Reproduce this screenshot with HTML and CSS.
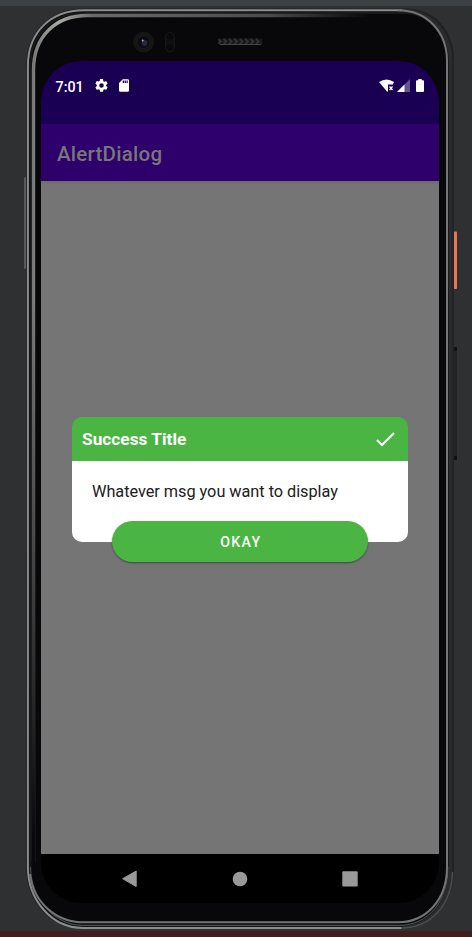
FILE: index.html
```
<!DOCTYPE html>
<html lang="en">
<head>
<meta charset="utf-8">
<title>AlertDialog</title>
<link rel="stylesheet" href="styles.css">
</head>
<body>
<div class="stage">
  <svg class="device" viewBox="0 0 472 937" aria-hidden="true">
    <defs>
      <linearGradient id="innerEdge" gradientUnits="userSpaceOnUse" x1="32" y1="0" x2="370" y2="0">
        <stop offset="0" stop-color="#777875"/>
        <stop offset=".08" stop-color="#a8a8a5"/>
        <stop offset=".18" stop-color="#6b6b69"/>
        <stop offset=".7" stop-color="#4b4b4b"/>
        <stop offset="1" stop-color="#08080a"/>
      </linearGradient>
      <linearGradient id="leftFade" gradientUnits="userSpaceOnUse" x1="0" y1="300" x2="0" y2="850">
        <stop offset="0" stop-color="#08080a" stop-opacity="0"/>
        <stop offset="1" stop-color="#08080a"/>
      </linearGradient>
      <pattern id="mesh" width="5.4" height="5" patternUnits="userSpaceOnUse" x="218" y="39">
        <path d="M0 0l3 2.5L0 5" fill="none" stroke="#383838" stroke-width="1.4"/>
      </pattern>
    </defs>
    <!-- side buttons -->
    <rect x="24" y="177" width="2" height="92" rx="1" fill="#58595a"/>
    <rect x="453.500" y="231.500" width="3.500" height="57.500" rx="1" fill="#ee7358"/>
    <rect x="454" y="347" width="3" height="113" rx="1" fill="#222425"/>
    <path d="M454 347h3v4h-3zM454 456h3v4h-3z" fill="#111"/>
    <!-- metal body -->
    <path d="M84 8.500H405C435 8.500 454 30 454 61V867C454 903 432 929 402 929H83C49 929 26 901 26 867V66C26 31 50 8.500 84 8.500Z" fill="#202122"/>
    <path d="M84 10.300H402C430 10.300 449 31 449 61V867C449 902 430 928 402 928H83C51 928 27.900 899 27.900 867V66C27.900 32 51 10.300 84 10.300Z" fill="#101112"/>
    <path d="M402 11C431 11 450.500 33 450.500 61V867C450.500 902 430 926.500 402 926.500" fill="none" stroke="#292b2c" stroke-width="4"/>
    <path d="M402 928H83C51 928 27.900 899 27.900 867V66C27.900 32 51 10.300 84 10.300H402" fill="none" stroke="#8a8c90" stroke-width="2"/>
    <path d="M401 928C432 928 451.500 904 452.500 872" fill="none" stroke="#4c4e4f" stroke-width="1.500"/>
    <path d="M84 13H403C430 13 447.500 35 447.500 61V867C447.500 900 430 925 400 925H83C55 925 30.500 899 30.500 867V66C30.500 34 53 13 84 13Z" fill="#08080a" stroke="#17191a" stroke-width="2"/>
    <path d="M33.500 862V70C33.500 36 56 15.500 87 15.500H370" fill="none" stroke="url(#innerEdge)" stroke-width="3.400"/>
    <rect x="31.500" y="300" width="4" height="563" fill="url(#leftFade)"/>
    <path d="M30.500 867C30.500 899 55 925.500 83 925.500H398C429 925.500 448 901 448 867" fill="none" stroke="#505251" stroke-width="1"/>
    <path d="M398 10.300C427 10.300 447 32 447 61V867C447 900 426 922.300 398 922.300H84C56 922.300 33 902 30 874" fill="none" stroke="#747574" stroke-width="2"/>
    <!-- camera, sensor, earpiece -->
    <circle cx="143.500" cy="42" r="10.500" fill="#151516"/>
    <circle cx="143.500" cy="42" r="6.500" fill="#0c0c0f" stroke="#1c1c1e"/>
    <circle cx="144.500" cy="43" r="3" fill="#24293e"/>
    <circle cx="142.700" cy="40.500" r="1" fill="#aaaab2"/>
    <rect x="165.500" y="32.500" width="9" height="19.500" rx="4.500" fill="#0f0f10" stroke="#151516"/>
    <circle cx="170" cy="36.500" r="3" fill="#09090a"/>
    <circle cx="170" cy="47.500" r="3" fill="#09090a"/>
    <rect x="218" y="38.500" width="44" height="6" rx="2" fill="#161616"/>
    <rect x="218" y="38.500" width="44" height="6" rx="2" fill="url(#mesh)"/>
    <path d="M220 44.500h41" stroke="#454545"/>
  </svg>

  <main class="screen">
    <header class="status">
      <span class="clock">7:01</span>
      <svg class="gear" viewBox="2 2 20 20"><path fill="#fff" fill-rule="evenodd" d="M19.140 12.940a7.500 7.500 0 0 0 0-1.880l2.030-1.580a.5.500 0 0 0 .12-.61l-1.920-3.320a.5.500 0 0 0-.59-.22l-2.390.96a7 7 0 0 0-1.620-.94l-.36-2.540A.5.500 0 0 0 13.920 2h-3.840a.5.500 0 0 0-.47.410l-.36 2.540a7 7 0 0 0-1.620.94l-2.390-.96a.5.500 0 0 0-.59.220L2.730 8.870a.5.500 0 0 0 .12.610l2.030 1.580a7.500 7.500 0 0 0 0 1.880l-2.030 1.580a.5.500 0 0 0-.12.610l1.920 3.320a.5.500 0 0 0 .59.220l2.390-.96a7 7 0 0 0 1.620.94l.36 2.540a.5.500 0 0 0 .47.410h3.840a.5.500 0 0 0 .47-.41l.36-2.540a7 7 0 0 0 1.620-.94l2.390.96a.5.500 0 0 0 .59-.22l1.920-3.320a.5.500 0 0 0-.12-.61zM12 15.500a3.500 3.500 0 1 1 0-7 3.500 3.500 0 0 1 0 7z"/></svg>
      <svg class="card" viewBox="4 2 16 20"><path fill="#fff" fill-rule="evenodd" d="M18 2h-8L4 8v12q0 2 2 2h12q2 0 2-2V4q0-2-2-2zM10 4h2v4h-2zM13 4h2v4h-2zM16 4h2v4h-2z"/></svg>
      <span class="grow"></span>
      <svg class="wifi" viewBox="0 0 15 13"><path fill="#fff" d="M0 3Q7.500-2 15 3L13.800 5.500H9V12.500H8Z"/><path d="M10.500 7.500l3 3.500m0-3.500l-3 3.500" stroke="#fff" stroke-width="1.300"/></svg>
      <svg class="signal" viewBox="0 0 13 13"><path fill="#66538d" d="M13 0v13H0z"/><path fill="#fff" d="M7.500 5.500V13H0z"/></svg>
      <svg class="battery" viewBox="0 0 8 13"><path fill="#fff" d="M2.300 0h3.400v1.300H7q1 0 1 1V12q0 1-1 1H1q-1 0-1-1V2.300q0-1 1-1h1.300z"/></svg>
    </header>
    <div class="appbar">AlertDialog</div>
    <section class="content">
      <div class="dialog">
        <div class="dialog-head">
          <h1>Success Title</h1>
          <svg class="check" viewBox="0 0 19 15"><path d="M1 8l5 5L18 1" fill="none" stroke="#fff" stroke-width="2"/></svg>
        </div>
        <p class="message">Whatever msg you want to display</p>
        <button class="okay">OKAY</button>
      </div>
    </section>
    <nav class="nav">
      <svg viewBox="0 0 16 18"><path d="M.7 8.700L14.200 1v15.500z" fill="#999" stroke="#999" stroke-linejoin="round"/></svg>
      <svg viewBox="0 0 16 18"><circle cx="8" cy="9" r="7.300" fill="#999"/></svg>
      <svg viewBox="0 0 16 18"><rect x=".3" y="1.200" width="15.400" height="15.400" rx="1" fill="#999"/></svg>
    </nav>
  </main>
</div>
</body>
</html>
```
FILE: styles.css
```
* { box-sizing: border-box; }
body { margin: 0; font-family: Roboto, "Liberation Sans", sans-serif; }
svg { display: block; flex: none; }
.stage {
  position: relative;
  width: 472px;
  height: 937px;
  padding: 61px 33px 34px 41px;
  overflow: hidden;
  background: linear-gradient(#3c4144 0 6px, #2e3031 6px 931px, #421d1d 931px);
}
.device { position: absolute; top: 0; left: 0; width: 472px; height: 937px; }
.screen {
  position: relative;
  display: flex;
  flex-direction: column;
  width: 398px;
  height: 842px;
  overflow: hidden;
  border-radius: 40px;
  background: #000;
}
.status {
  display: flex;
  align-items: flex-start;
  height: 63px;
  padding: 18px 15px 0 14.500px;
  background: #1a0052;
  color: #fff;
}
.clock { width: 39.500px; font-size: 14.300px; font-weight: 500; line-height: 17px; }
.gear { width: 13px; height: 13px; }
.card { width: 10px; height: 13px; margin-left: 11px; }
.grow { flex: 1; }
.wifi { width: 15px; height: 13px; }
.signal { width: 13px; height: 13px; margin-left: 3px; }
.battery { width: 8px; height: 13px; margin-left: 6px; }
.appbar {
  height: 57px;
  padding-left: 16px;
  background: #2e006c;
  color: #777;
  font-size: 20.500px;
  font-weight: 500;
  letter-spacing: .25px;
  line-height: 60px;
}
.content {
  height: 673px;
  padding: 236px 31px 0 30.500px;
  background: linear-gradient(#6c6c6c, #757575 4px);
}
.dialog {
  display: flex;
  flex-direction: column;
  align-items: center;
  height: 124.500px;
  border-radius: 10px;
  background: linear-gradient(#4ab543 44px, #fff 44px);
}
.dialog-head {
  display: flex;
  align-items: center;
  justify-content: space-between;
  align-self: stretch;
  flex: none;
  height: 44px;
  padding: 0 13px 0 10.500px;
}
h1 { margin: 0 0 1px; color: #fff; font-size: 17.200px; font-weight: 700; line-height: 20px; letter-spacing: .05px; }
.check { width: 19px; height: 15px; }
.message {
  align-self: stretch;
  margin: 21px 0 0 20.500px;
  color: #202020;
  font-size: 16.300px;
  line-height: 20px;
  letter-spacing: -.03px;
}
.okay {
  flex: none;
  width: 256px;
  height: 41px;
  margin-top: 19px;
  padding: 0 0 0 2px;
  border: 0;
  border-radius: 21px;
  background: #4ab543;
  box-shadow: 0 1px 2px rgba(0, 0, 0, .4);
  color: #fff;
  font: 500 14.200px/20px Roboto, sans-serif;
  letter-spacing: 1.300px;
}
.nav {
  display: flex;
  justify-content: space-between;
  height: 49px;
  padding: 16px 81.500px 0 80.500px;
}
.nav svg { width: 16px; height: 18px; }
```
